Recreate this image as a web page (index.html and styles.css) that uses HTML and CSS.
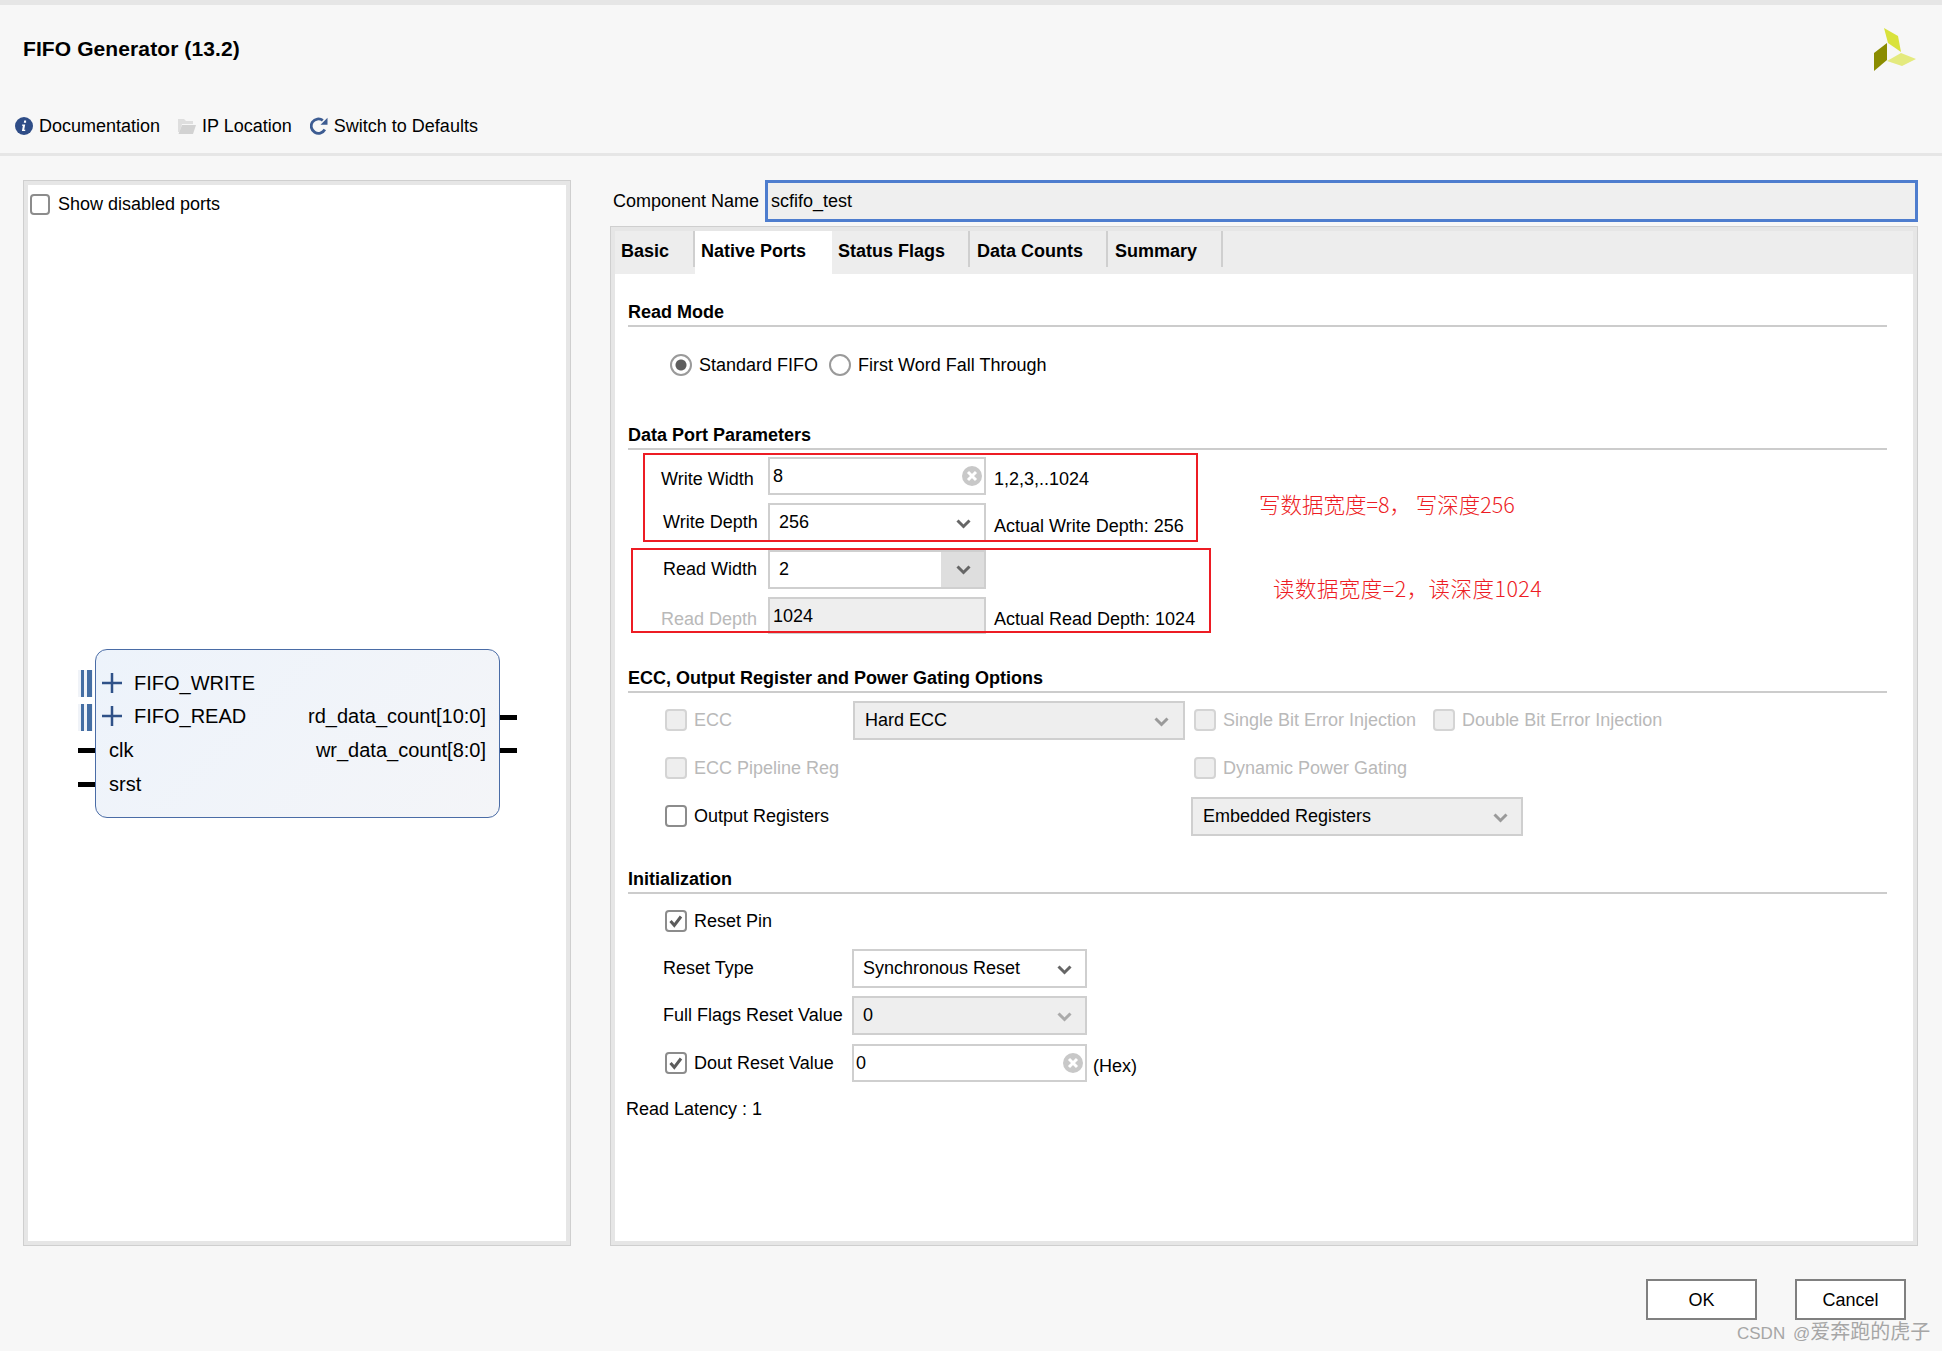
FILE: index.html
```html
<!DOCTYPE html>
<html lang="en">
<head>
<meta charset="utf-8">
<title>FIFO Generator (13.2)</title>
<link rel="stylesheet" href="styles.css">
</head>
<body>
<header class="header">
  <div class="title-row">
    <h1 class="title">FIFO Generator (13.2)</h1>
    <svg class="logo" width="44" height="45" viewBox="0 0 44 45">
      <polygon points="0,25 13,15 13,32 0,43" fill="#8a8c00"/>
      <polygon points="10,0 24,8 27,24 14,15" fill="#d9e23c"/>
      <polygon points="13,33 27,25 42,31 28,38" fill="#e4ea7e"/>
    </svg>
  </div>
  <nav class="toolbar">
    <a class="tool">
      <svg width="18" height="18" viewBox="0 0 18 18"><circle cx="9" cy="9" r="9" fill="#2f4d87"/><path d="M7.2 7.6h3l-1 5.2h1.2l-.3 1.2H6.9l1-5.2H6.9zM9.2 3.6h1.9v2.2H8.8z" fill="#fff"/></svg>
      <span>Documentation</span>
    </a>
    <a class="tool">
      <svg width="18" height="17" viewBox="0 0 18 17"><path d="M0 1h6l2 2h7v3H4L1.500 14H0z" fill="#dedede"/><path d="M4 7h14l-3 9H0.500z" fill="#d2d2d2"/></svg>
      <span>IP Location</span>
    </a>
    <a class="tool">
      <svg width="18" height="18" viewBox="0 0 18 18"><path d="M14.800 12.500A7.200 7.200 0 1 1 12.800 3.400" fill="none" stroke="#3d5c92" stroke-width="2.800"/><path d="M17.500 0.800v7h-7z" fill="#3d5c92"/></svg>
      <span>Switch to Defaults</span>
    </a>
  </nav>
</header>

<main class="main">
  <section class="frame left-panel">
    <div class="canvas">
      <label class="show-ports"><span class="check"></span>Show disabled ports</label>
      <div class="symbol">
        <div class="port">
          <span class="bus-pin"></span>
          <span class="port-left bus"><svg class="plus" width="20" height="20" viewBox="0 0 20 20"><path d="M10 0v20M0 10h20" stroke="#2f5188" stroke-width="2.500"/></svg>FIFO_WRITE</span>
        </div>
        <div class="port">
          <span class="bus-pin"></span>
          <span class="port-left bus"><svg class="plus" width="20" height="20" viewBox="0 0 20 20"><path d="M10 0v20M0 10h20" stroke="#2f5188" stroke-width="2.500"/></svg>FIFO_READ</span>
          <span class="port-right">rd_data_count[10:0]</span>
          <span class="pin-right"></span>
        </div>
        <div class="port">
          <span class="pin-left"></span>
          <span class="port-left">clk</span>
          <span class="port-right">wr_data_count[8:0]</span>
          <span class="pin-right"></span>
        </div>
        <div class="port">
          <span class="pin-left"></span>
          <span class="port-left">srst</span>
        </div>
      </div>
    </div>
  </section>

  <section class="right-col">
    <div class="name-row">
      <label class="name-label">Component Name</label>
      <div class="name-input">scfifo_test</div>
    </div>
    <div class="frame tab-frame">
      <div class="tab-inner">
        <div class="tabs">
          <div class="tab tab-basic">Basic</div>
          <div class="tab tab-active">Native Ports</div>
          <div class="tab tab-status">Status Flags</div>
          <div class="tab tab-data">Data Counts</div>
          <div class="tab tab-last">Summary</div>
        </div>
        <div class="tab-body">
          <h2 class="section-head">Read Mode</h2>
          <div class="radio-row">
            <span class="radio radio-on"></span><span class="radio-text">Standard FIFO</span>
            <span class="radio"></span><span>First Word Fall Through</span>
          </div>

          <h2 class="section-head head-data">Data Port Parameters</h2>
          <div class="data-grid">
            <span class="lbl lbl-a low">Write Width</span>
            <div class="field"><span class="val-tight">8</span><svg class="clear" width="20" height="20" viewBox="0 0 20 20"><circle cx="10" cy="10" r="10" fill="#c8c8c8"/><path d="M6 6l8 8M14 6l-8 8" stroke="#fff" stroke-width="3"/></svg></div>
            <span class="hint low">1,2,3,..1024</span>

            <span class="lbl">Write Depth</span>
            <div class="field sel"><span>256</span><svg class="chev" width="15" height="10" viewBox="0 0 15 10"><path d="M1.500 1.500L7.500 7.500l6-6" fill="none" stroke="#666" stroke-width="3"/></svg></div>
            <span class="hint low">Actual Write Depth: 256</span>

            <span class="lbl">Read Width</span>
            <div class="field sel sel-shaded"><span>2</span><span class="chev-box"><svg width="15" height="10" viewBox="0 0 15 10"><path d="M1.500 1.500L7.500 7.500l6-6" fill="none" stroke="#666" stroke-width="3"/></svg></span></div>
            <span class="hint"></span>

            <span class="lbl lbl-a low dim">Read Depth</span>
            <div class="field field-off"><span class="val-tight">1024</span></div>
            <span class="hint low">Actual Read Depth: 1024</span>
          </div>
          <div class="red-box red-write"></div>
          <div class="red-box red-read"></div>
          <p class="note note-write">写数据宽度=8， 写深度256</p>
          <p class="note note-read">读数据宽度=2，读深度1024</p>

          <h2 class="section-head head-ecc">ECC, Output Register and Power Gating Options</h2>
          <div class="ecc-grid">
            <label class="opt dim"><span class="check check-off"></span>ECC</label>
            <div class="field sel field-off sel-wide"><span>Hard ECC</span><svg class="chev" width="15" height="10" viewBox="0 0 15 10"><path d="M1.500 1.500L7.500 7.500l6-6" fill="none" stroke="#9a9a9a" stroke-width="3"/></svg></div>
            <div class="ecc-opts">
              <label class="opt dim opt-single"><span class="check check-off"></span>Single Bit Error Injection</label>
              <label class="opt dim"><span class="check check-off"></span>Double Bit Error Injection</label>
            </div>

            <label class="opt dim"><span class="check check-off"></span>ECC Pipeline Reg</label>
            <span></span>
            <div class="ecc-opts">
              <label class="opt dim"><span class="check check-off"></span>Dynamic Power Gating</label>
            </div>

            <label class="opt"><span class="check"></span>Output Registers</label>
            <span></span>
            <div class="field sel field-off sel-embedded"><span>Embedded Registers</span><svg class="chev" width="15" height="10" viewBox="0 0 15 10"><path d="M1.500 1.500L7.500 7.500l6-6" fill="none" stroke="#9a9a9a" stroke-width="3"/></svg></div>
          </div>

          <h2 class="section-head head-init">Initialization</h2>
          <div class="init-grid">
            <label class="opt opt-init"><span class="check"><svg width="18" height="18" viewBox="0 0 18 18"><path d="M3.500 9l3.800 4.300L14 4.500" fill="none" stroke="#5c5c5c" stroke-width="3"/></svg></span>Reset Pin</label>
            <span></span><span></span>

            <span class="lbl">Reset Type</span>
            <div class="field sel"><span>Synchronous Reset</span><svg class="chev" width="15" height="10" viewBox="0 0 15 10"><path d="M1.500 1.500L7.500 7.500l6-6" fill="none" stroke="#666" stroke-width="3"/></svg></div>
            <span></span>

            <span class="lbl">Full Flags Reset Value</span>
            <div class="field sel field-off"><span>0</span><svg class="chev" width="15" height="10" viewBox="0 0 15 10"><path d="M1.500 1.500L7.500 7.500l6-6" fill="none" stroke="#aaa" stroke-width="3"/></svg></div>
            <span></span>

            <label class="opt opt-init opt-dout"><span class="check"><svg width="18" height="18" viewBox="0 0 18 18"><path d="M3.500 9l3.800 4.300L14 4.500" fill="none" stroke="#5c5c5c" stroke-width="3"/></svg></span>Dout Reset Value</label>
            <div class="field field-dout"><span class="val-tight">0</span><svg class="clear" width="20" height="20" viewBox="0 0 20 20"><circle cx="10" cy="10" r="10" fill="#c8c8c8"/><path d="M6 6l8 8M14 6l-8 8" stroke="#fff" stroke-width="3"/></svg></div>
            <span class="hex">(Hex)</span>
          </div>
          <p class="latency">Read Latency : 1</p>
        </div>
      </div>
    </div>
  </section>
</main>

<footer class="footer">
  <button class="btn">OK</button>
  <button class="btn">Cancel</button>
  <span class="watermark">CSDN @<span class="watermark-cjk">爱奔跑的虎子</span></span>
</footer>
</body>
</html>
```

FILE: styles.css
```css
* { box-sizing: border-box; }
html, body { margin: 0; padding: 0; }
body {
  width: 1942px;
  height: 1351px;
  overflow: hidden;
  display: flex;
  flex-direction: column;
  background: #f7f7f7;
  border-top: 5px solid #e6e6e6;
  font: 18px/24px "Liberation Sans", Arial, sans-serif;
  color: #000;
}
h1, h2, p { margin: 0; }

/* header */
.header { height: 151px; flex: none; border-bottom: 3px solid #e6e6e6; }
.title-row {
  height: 89px;
  display: flex;
  align-items: center;
  justify-content: space-between;
  padding: 0 24px 0 23px;
}
.title { font-size: 21px; font-weight: 700; line-height: 26px; margin-top: -1px; letter-spacing: 0.1px; }
.logo { margin-top: 2px; }
.toolbar { display: flex; height: 28px; margin-top: 18px; padding-left: 15px; gap: 18px; align-items: center; }
.tool { display: flex; align-items: center; gap: 6px; }
.tool svg { flex: none; }

/* main */
.main { height: 1090px; flex: none; display: flex; gap: 39px; padding: 24px 24px 0 23px; }
.frame {
  background: #e6e6e6;
  box-shadow: inset 0 0 0 1px #cfcfcf;
  padding: 5px;
}
.left-panel { width: 548px; height: 1066px; flex: none; }
.canvas { position: relative; height: 100%; background: #fff; padding: 7px 2px; }
.show-ports { display: flex; align-items: center; gap: 8px; }
.show-ports .check { width: 20px; height: 21px; }

.check {
  width: 22px;
  height: 22px;
  flex: none;
  display: flex;
  align-items: center;
  justify-content: center;
  border: 2px solid #8c8c8c;
  border-radius: 4px;
  background: #fff;
}
.check-off { border-color: #d4d4d4; background: #eee; }

/* block diagram */
.symbol {
  position: absolute;
  left: 67px;
  top: 464px;
  width: 405px;
  height: 169px;
  padding-top: 16px;
  border: 1px solid #4a6ca6;
  border-radius: 12px;
  background: linear-gradient(135deg, #edf3fb, #f4f5f8);
  font-size: 20px;
}
.port { position: relative; height: 33.600px; display: flex; align-items: center; justify-content: space-between; padding: 0 13px; }
.port-left { display: flex; align-items: center; }
.port-left.bus { margin-left: -7px; }
.plus { margin-right: 12px; }
.bus-pin {
  position: absolute;
  left: -18px;
  top: 4px;
  width: 15px;
  height: 27px;
  background: linear-gradient(90deg, #f0f3f8 0 3px, #456ea3 3px 6px, #f0f3f8 6px 9px, #456ea3 9px 14px, #f0f3f8 14px);
}
.pin-left, .pin-right { position: absolute; height: 5px; background: #000; top: 15px; width: 17px; }
.pin-left { left: -18px; }
.pin-right { right: -18px; }

/* right column */
.right-col { flex: 1; min-width: 0; }
.name-row { display: flex; align-items: center; height: 42px; margin-bottom: 4px; padding-left: 3px; gap: 6px; }
.name-input {
  flex: 1;
  height: 42px;
  padding-left: 3px;
  background: #efefef;
  border: 3px solid #4e7dce;
  line-height: 36px;
}
.tab-frame { height: 1020px; }
.tab-inner { height: 100%; background: #fff; }
.tabs { height: 43px; background: #ededed; display: flex; align-items: flex-start; }
.tab { height: 36px; padding-left: 7px; font-weight: 700; line-height: 40px; width: 138px; border-right: 2px solid #cfcfcf; }
.tab-basic { width: 80px; padding-left: 6px; }
.tab-active { width: 137px; height: 43px; background: #fff; border-right: 0; padding-left: 6px; }
.tab-status { padding-left: 6px; }
.tab-last { width: 115px; }
.tab-body { position: relative; padding: 24px 26px 0 13px; }

.section-head {
  height: 29px;
  font-size: 18px;
  line-height: 28px;
  font-weight: 700;
  border-bottom: 2px solid #ccc;
}
.radio-row { display: flex; align-items: center; height: 30px; margin-top: 23px; padding-left: 42px; }
.radio {
  width: 22px;
  height: 22px;
  border: 2px solid #9a9a9a;
  border-radius: 50%;
  background: #fff;
  margin-right: 7px;
  flex: none;
}
.radio-on { background: radial-gradient(circle, #5e5e5e 0 5px, #fff 6px); }
.radio-text { margin-right: 11px; }

.head-data { margin-top: 41px; }
.data-grid {
  display: grid;
  grid-template-columns: 140px 218px 1fr;
  grid-template-rows: 38px 39px 39px 37px;
  row-gap: 8px;
  margin-top: 7px;
  align-items: center;
}
.lbl { padding-left: 35px; margin-top: -2px; }
.lbl-a { padding-left: 33px; margin-top: 0; }
.low { padding-top: 6px; }
.dim { color: #b9b9b9; }
.hint { padding-left: 8px; white-space: nowrap; }
.field {
  position: relative;
  align-self: stretch;
  display: flex;
  align-items: center;
  justify-content: space-between;
  background: #fff;
  border: 2px solid #cfcfcf;
  padding: 0 3px;
}
.val-tight { margin-top: -1px; }
.field-off .val-tight { margin-top: 1px; }
.sel { padding: 0 13px 0 9px; }
.sel > span:first-child { margin-top: -2px; }
.sel-wide { padding-left: 10px; padding-right: 14px; }
.clear { flex: none; margin-right: -1px; margin-top: -1px; }
.chev { flex: none; margin-top: 2px; }
.field-off { background: #eee; }
.sel-shaded { padding-right: 0; }
.chev-box { align-self: stretch; width: 43px; padding-left: 1px; background: #dedede; display: flex; align-items: center; justify-content: center; }

.red-box { position: absolute; border: 2px solid #ed1c24; pointer-events: none; }
.red-write { left: 28px; top: 179px; width: 555px; height: 89px; }
.red-read { left: 16px; top: 274px; width: 580px; height: 85px; }
.note {
  position: absolute;
  color: #ed1c24;
  font-family: "Noto Sans CJK SC", "Liberation Sans", sans-serif;
  font-size: 21.500px;
  font-weight: 300;
  line-height: 28px;
  white-space: nowrap;
}
.note-write { left: 644px; top: 216px; }
.note-read { left: 658px; top: 300px; letter-spacing: 0.450px; }

.head-ecc { margin-top: 30px; }
.ecc-grid {
  display: grid;
  grid-template-columns: 225px 332px 1fr;
  grid-template-rows: 39px 41px 39px;
  row-gap: 8px;
  margin-top: 8px;
  align-items: center;
}
.ecc-grid > .opt { padding-left: 37px; }
.opt { display: flex; align-items: center; gap: 7px; white-space: nowrap; margin-top: -2px; }
.ecc-opts { display: flex; padding-left: 9px; }
.opt-single { margin-right: 17px; }
.sel-embedded { width: 332px; margin-left: 6px; padding-left: 10px; }

.head-init { margin-top: 29px; }
.init-grid {
  display: grid;
  grid-template-columns: 224px 235px 1fr;
  grid-template-rows: repeat(4, 39px);
  row-gap: 8px;
  margin-top: 8px;
  align-items: center;
}
.opt-init { padding-left: 37px; }
.opt-dout { margin-top: 0; }
.field-dout { margin-top: 1px; padding-left: 2px; }
.hex { padding: 6px 0 0 6px; }
.latency { margin: 15px 0 0 -2px; }

/* footer */
.footer { position: relative; flex: 1; display: flex; justify-content: flex-end; gap: 38px; padding: 33px 36px 0 0; }
.btn {
  width: 111px;
  height: 41px;
  background: #fff;
  border: 2px solid #808080;
  font: 18px "Liberation Sans", Arial, sans-serif;
  color: #000;
  padding: 1px 0 0;
}
.watermark {
  position: absolute;
  left: 1737px;
  top: 74px;
  color: #a6a6a6;
  font-family: "Liberation Sans", "Noto Sans CJK SC", sans-serif;
  font-size: 17px;
  word-spacing: 3px;
  white-space: nowrap;
}
.watermark-cjk { font-size: 20px; }
```
